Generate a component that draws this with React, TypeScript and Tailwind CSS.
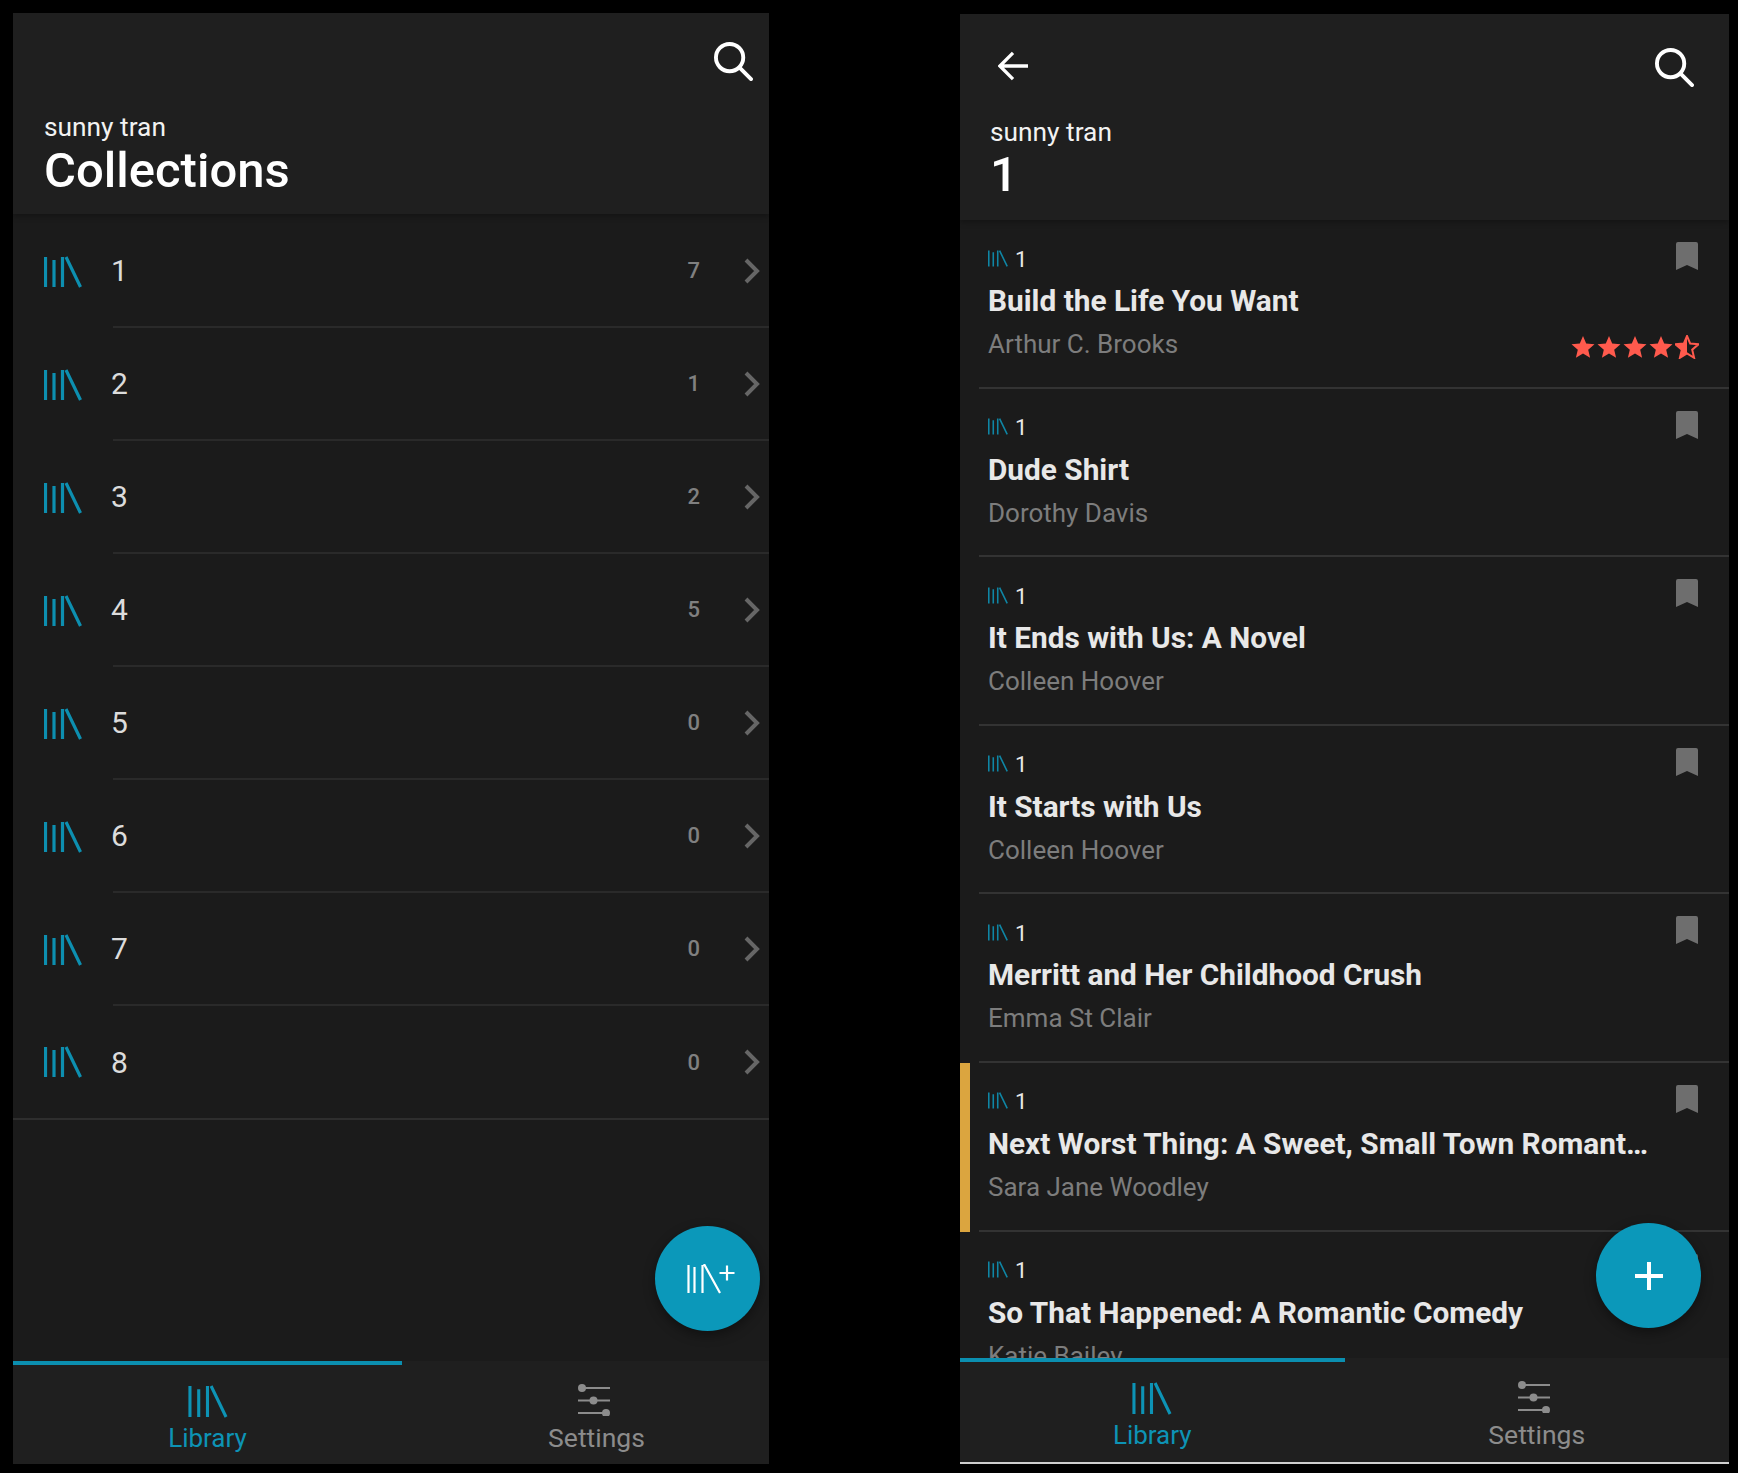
import React from 'react';

const FONT = "font-['Roboto',sans-serif]";

const LibraryIcon: React.FC<{ className?: string; w?: number; h?: number; sw?: number }> = ({ className, w = 38, h = 32, sw = 3.2 }) => (
  <svg width={w} height={h} viewBox="0 0 38 32" fill="none" stroke="currentColor" strokeWidth={sw} className={className}>
    <path d="M1.500 1v30M10 4v27M18.500 1v30M22 1l14.500 30" />
  </svg>
);

const SearchIcon: React.FC = () => (
  <svg width="39" height="39" viewBox="0 0 40 40" fill="none" stroke="#fff" strokeWidth="4" strokeLinecap="round" className="block">
    <circle cx="16" cy="16" r="14" />
    <path d="M26.500 26.500 38 38" />
  </svg>
);

const Chevron: React.FC = () => (
  <svg width="16" height="26" viewBox="0 0 16 26" fill="none" stroke="#666" strokeWidth="4" className="block">
    <path d="M2 2l11 11L2 24" />
  </svg>
);

const Bookmark: React.FC = () => (
  <svg width="22" height="28" viewBox="0 0 22 28" fill="#6e6e6e" className="block">
    <path d="M2 0h18a2 2 0 0 1 2 2v26l-11-5-11 5V2a2 2 0 0 1 2-2z" />
  </svg>
);

const STAR = 'M12 1l3.200 7.600 8.300.7-6.300 5.400 1.900 8.100L12 18.500 4.900 22.800l1.900-8.100L.5 9.300l8.300-.7z';

const Stars: React.FC = () => (
  <div className="flex gap-[2px]">
    {[0, 1, 2, 3].map((i) => (
      <svg key={i} width="24" height="24" viewBox="0 0 24 24" fill="#ff5a4d" className="block">
        <path d={STAR} />
      </svg>
    ))}
    <svg width="24" height="24" viewBox="0 0 24 24" className="block">
      <path d={STAR} fill="none" stroke="#ff5a4d" strokeWidth="2" />
      <path d="M12 1v17.500L4.900 22.800l1.900-8.100L.5 9.300l8.300-.7z" fill="#ff5a4d" />
    </svg>
  </div>
);

const SettingsIcon: React.FC = () => (
  <svg width="32" height="32" viewBox="0 0 32 32" fill="#8c8c8c" stroke="#8c8c8c" className="block mr-[6px]">
    <path d="M4 4h28M0 16.500h32M0 29h28" strokeWidth="1.800" fill="none" />
    <circle cx="4" cy="4" r="4" stroke="none" />
    <circle cx="15.500" cy="16.500" r="4" stroke="none" />
    <circle cx="28" cy="29" r="4" stroke="none" />
  </svg>
);

const TabBar: React.FC<{ grid: string; indicator: string; extra?: string }> = ({ grid, indicator, extra }) => (
  <div className={`relative z-10 shrink-0 bg-[#1f1f1f] overflow-hidden ${extra ?? ''}`}>
    <div className={`h-1 bg-[#0b8fb0] ${indicator}`} />
    <div className={`grid ${grid} h-[99px]`}>
      <div className="flex flex-col items-center pt-[20px] text-[#0d93b5]">
        <LibraryIcon w={40} h={33} sw={3} />
        <span className="text-[26px] leading-[36px] mt-[2px]">Library</span>
      </div>
      <div className="flex flex-col items-center pt-[19px] text-[#8c8c8c]">
        <SettingsIcon />
        <span className="text-[26.500px] leading-[36px] mt-[4px]">Settings</span>
      </div>
    </div>
  </div>
);

const collections = [
  { name: '1', count: 7 },
  { name: '2', count: 1 },
  { name: '3', count: 2 },
  { name: '4', count: 5 },
  { name: '5', count: 0 },
  { name: '6', count: 0 },
  { name: '7', count: 0 },
  { name: '8', count: 0 },
];

const books = [
  { title: 'Build the Life You Want', author: 'Arthur C. Brooks', rated: true },
  { title: 'Dude Shirt', author: 'Dorothy Davis' },
  { title: 'It Ends with Us: A Novel', author: 'Colleen Hoover' },
  { title: 'It Starts with Us', author: 'Colleen Hoover' },
  { title: 'Merritt and Her Childhood Crush', author: 'Emma St Clair' },
  { title: 'Next Worst Thing: A Sweet, Small Town Romantic Comedy', author: 'Sara Jane Woodley', current: true },
  { title: 'So That Happened: A Romantic Comedy', author: 'Katie Bailey' },
];

const CollectionsScreen: React.FC = () => (
  <div className="relative flex flex-col w-[756px] h-[1451px] bg-[#1b1b1b] overflow-hidden">
    <header className="relative z-10 h-[201px] shrink-0 bg-[#1f1f1f] shadow-[0_2px_6px_rgba(0,0,0,0.3)] flex flex-col px-[31px]">
      <div className="flex justify-end pt-[29px] -mr-[15px]">
        <SearchIcon />
      </div>
      <div className="mt-[30px] text-[26.300px] leading-[32px] text-[#f2f2f2]">sunny tran</div>
      <h1 className="text-[49px] leading-[56px] font-medium text-white">Collections</h1>
    </header>
    <div className="flex-1 min-h-0 pt-px">
      <ul className="border-b-2 border-[#2e2e2e]">
        {collections.map((c, i) => {
          const last = i === collections.length - 1;
          return (
            <li key={c.name} className={`flex ${last ? 'h-[112px]' : 'h-[113px]'}`}>
              <div className="w-[100px] shrink-0 pl-[31px] flex items-center text-[#0d8fb0]">
                <LibraryIcon />
              </div>
              <div className={`flex-1 flex items-center pr-[9px] ${last ? '' : 'border-b-2 border-[#2a2a2a]'}`}>
                <span className="flex-1 -ml-[2px] text-[30px] text-[#dcdcdc]">{c.name}</span>
                <span className="text-[22px] font-medium text-[#808080] mr-[44px]">{c.count}</span>
                <Chevron />
              </div>
            </li>
          );
        })}
      </ul>
    </div>
    <button className="absolute right-[9px] bottom-[133px] z-20 w-[105px] h-[105px] rounded-full bg-[#0b98ba] shadow-[0_4px_12px_rgba(0,0,0,0.4)] flex items-center justify-center text-white">
      <svg width="48" height="30" viewBox="0 0 48 30" fill="none" stroke="currentColor" strokeWidth="2.200" className="ml-[7px]">
        <path d="M1.500 1v28M7.500 3v26M15.500 1v28M17 0l16 29M40 1.500v15M32.500 9h15" />
      </svg>
    </button>
    <TabBar grid="grid-cols-[389px_389px]" indicator="w-[389px]" extra="h-[103px]" />
  </div>
);

const BooksScreen: React.FC = () => (
  <div className="relative flex flex-col w-[769px] h-[1450px] mt-px bg-[#1b1b1b] overflow-hidden">
    <header className="relative z-10 h-[206px] shrink-0 bg-[#1f1f1f] shadow-[0_2px_6px_rgba(0,0,0,0.3)] flex flex-col pl-[30px] pr-[31px]">
      <div className="flex items-center justify-between pt-[34px] pl-[8px] mr-[4px]">
        <svg width="30" height="30" viewBox="0 0 32 32" fill="none" stroke="#fff" strokeWidth="3.500" className="block mb-[3px]">
          <path d="M16 2 2 16l14 14M2 16h30" />
        </svg>
        <SearchIcon />
      </div>
      <div className="mt-[29px] text-[26.300px] leading-[32px] text-[#f2f2f2]">sunny tran</div>
      <h1 className="text-[49px] leading-[54px] font-medium text-white">1</h1>
    </header>
    <ul className="flex-1 min-h-0 overflow-hidden">
      {books.map((b) => (
        <li key={b.title} className="flex h-[168.600px]">
          <div className="w-[19px] shrink-0">
            {b.current && <div className="w-[10px] h-full bg-[#dba53f]" />}
          </div>
          <div className="relative flex-1 min-w-0 border-b-2 border-[#333] pl-[9px] pr-[31px] pt-[26px]">
            <div className="flex items-center gap-[7px] h-[24px] text-[#0f86a5]">
              <LibraryIcon w={20} h={17} sw={3} />
              <span className="text-[22px] pt-[2px] text-[#e8e8e8]">1</span>
            </div>
            <div className="flex items-start">
              <h2 className="mt-[13px] w-[668px] truncate text-[29.800px] leading-[36px] font-bold text-[#e8e8e8]">{b.title}</h2>
            </div>
            <div className="mt-[7px] text-[26px] leading-[36px] text-[#7d7d7d]">{b.author}</div>
            <div className="absolute right-[31px] top-[22px]">
              <Bookmark />
            </div>
            {b.rated && (
              <div className="absolute right-[30px] top-[115px]">
                <Stars />
              </div>
            )}
          </div>
        </li>
      ))}
    </ul>
    <button className="absolute right-[28px] bottom-[136px] z-20 w-[105px] h-[105px] rounded-full bg-[#0b98ba] shadow-[0_4px_12px_rgba(0,0,0,0.4)] flex items-center justify-center">
      <svg width="28" height="28" viewBox="0 0 28 28" fill="none" stroke="#fff" strokeWidth="4">
        <path d="M14 0v28M0 14h28" />
      </svg>
    </button>
    <TabBar grid="grid-cols-2" indicator="w-1/2" extra="h-[106px] border-b-2 border-[#cfcfcf]" />
  </div>
);

export default function App() {
  return (
    <div className={`${FONT} min-h-[1473px] bg-black flex items-start gap-[191px] pl-[13px] pt-[13px]`}>
      <CollectionsScreen />
      <BooksScreen />
    </div>
  );
}
